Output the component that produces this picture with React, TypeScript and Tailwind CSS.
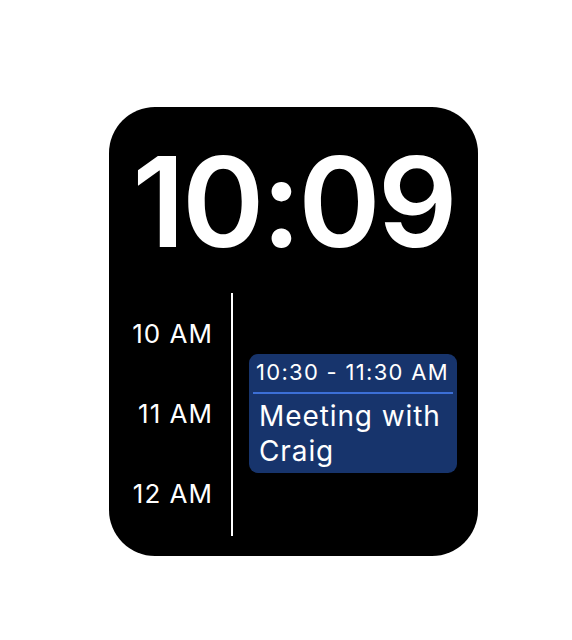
import React from "react";

export default function App() {
  const font = { fontFamily: "Inter, 'Noto Sans', sans-serif" };
  return (
    <div className="w-[572px] h-[640px] bg-white" style={font}>
      <div className="pt-[107px] pl-[109px]">
        <div className="w-[369px] h-[449px] rounded-[46px] bg-black flex flex-col text-white">
          <div className="pt-[32px] text-center text-[125px] leading-[125px] font-semibold tracking-[-3px]">
            10:09
          </div>
          <div className="mt-[29px] flex">
            <div className="w-[104px] flex flex-col items-end pt-[25px] gap-[48px] text-[26px] leading-[32px] tracking-[1px]">
              <div>10 AM</div>
              <div>11 AM</div>
              <div>12 AM</div>
            </div>
            <div className="ml-[18px] w-[2px] h-[243px] bg-white" />
            <div className="ml-[16px] mt-[61px] w-[208px] h-[119px] rounded-[9px] bg-[#17346c] flex flex-col">
              <div className="pt-[6px] px-[7px] text-[22px] leading-[25px] tracking-[1.3px] whitespace-nowrap">
                10:30 - 11:30 AM
              </div>
              <div className="mt-[7px] mx-[4px] h-[2px] bg-[#3c6fd6]" />
              <div className="mt-[5px] px-[10px] text-[28px] leading-[35px] tracking-[0.9px]">
                Meeting with Craig
              </div>
            </div>
          </div>
        </div>
      </div>
    </div>
  );
}
